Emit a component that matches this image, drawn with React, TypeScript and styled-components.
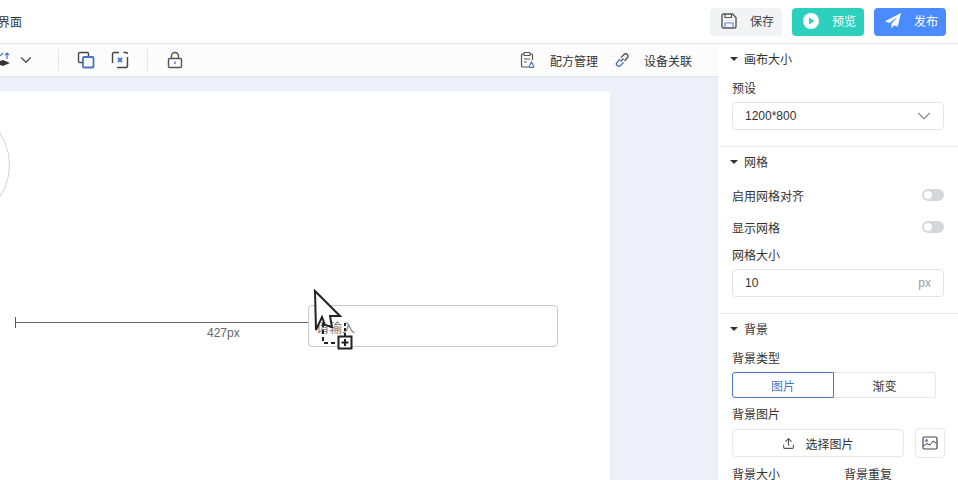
import * as React from 'react';
import styled, { createGlobalStyle } from 'styled-components';
import { ChevronDown, Upload } from 'lucide-react';

const GlobalStyle = createGlobalStyle`
    html, body {
        margin: 0;
        height: 100%;
        overflow: hidden;
        background: #fff;
    }
    body {
        font-family: "Liberation Sans", "Noto Sans CJK SC", sans-serif;
        font-size: 12px;
        color: #333;
    }
    * { box-sizing: border-box; }
`

const Page = styled.div`
    width: 958px;
    height: 480px;
    display: flex;
    flex-direction: column;
    overflow: hidden;
`

const Header = styled.header`
    height: 44px;
    flex: none;
    display: flex;
    align-items: center;
    justify-content: space-between;
    padding: 0 12px 0 0;
    border-bottom: 1px solid #e4e5e8;
`

const Title = styled.div`
    margin-left: -2px;
    font-size: 12px;
    color: #333;
`

const HeaderActions = styled.div`
    display: flex;
    gap: 10px;
`

const ActionButton = styled.button<{$bg: string; $color: string}>`
    width: 72px;
    height: 28px;
    border: none;
    border-radius: 4px;
    padding: 0 0 2px 10px;
    display: flex;
    align-items: center;
    gap: 12px;
    font: inherit;
    background: ${({$bg}) => $bg};
    color: ${({$color}) => $color};
`

const Body = styled.div`
    flex: 1;
    display: flex;
    min-height: 0;
`

const Main = styled.main`
    flex: 1;
    min-width: 0;
    display: flex;
    flex-direction: column;
`

const Toolbar = styled.div`
    height: 33px;
    flex: none;
    display: flex;
    align-items: center;
    justify-content: space-between;
    background: #fcfcfc;
    border-bottom: 1px solid #e6e7ea;
    padding-right: 26px;
`

const ToolGroup = styled.div`
    display: flex;
    align-items: center;
`

const ToolDivider = styled.span<{$left: number; $right: number}>`
    width: 1px;
    height: 22px;
    background: #dfe3ec;
    margin: 0 ${({$right}) => $right}px 0 ${({$left}) => $left}px;
`

const IconSlot = styled.span<{$gap?: number}>`
    display: flex;
    width: 18px;
    height: 18px;
    margin-right: ${({$gap}) => $gap ?? 0}px;
`

const ToolLabel = styled.span<{$gap?: number}>`
    margin-left: 13px;
    margin-right: ${({$gap}) => $gap ?? 0}px;
    color: #333;
`

const CanvasArea = styled.div`
    flex: 1;
    background: #eef0f9;
    padding-top: 14px;
    overflow: hidden;
`

const Sheet = styled.div`
    position: relative;
    width: 610px;
    height: 420px;
    background: #fff;
`

const CircleShape = styled.div`
    position: absolute;
    left: -106px;
    top: 16px;
    width: 116px;
    height: 116px;
    border: 1px solid #d4d4d4;
    border-radius: 50%;
`

const Ruler = styled.div`
    position: absolute;
    left: 15px;
    top: 226px;
    width: 294px;
    height: 11px;
    border-left: 1px solid #5e5258;
    &::after {
        content: "";
        position: absolute;
        left: 0;
        right: 0;
        top: 5px;
        height: 1px;
        background: #6e5f66;
    }
`

const RulerLabel = styled.div`
    position: absolute;
    left: 207px;
    top: 235px;
    color: #666;
    font-size: 12px;
`

const DroppedInput = styled.div`
    position: absolute;
    left: 308px;
    top: 214px;
    width: 250px;
    height: 42px;
    border: 1px solid #c9c9c9;
    border-radius: 4px;
    padding-left: 7px;
    display: flex;
    align-items: center;
    font-size: 13px;
    color: #777;
`

const DragCursor = styled.svg`
    position: absolute;
    left: 312px;
    top: 198px;
`

const Sidebar = styled.aside`
    width: 240px;
    flex: none;
    background: #fff;
    overflow: hidden;
`

const Section = styled.section<{$last?: boolean}>`
    margin-left: 2px;
    padding: 0 14px ${({$last}) => ($last ? 0 : 16)}px 12px;
    border-bottom: ${({$last}) => ($last ? "none" : "1px solid #e8e9ec")};
`

const SectionTitle = styled.div`
    height: 29px;
    display: flex;
    align-items: center;
    gap: 6px;
    color: #333;
    &::before {
        content: "";
        margin-left: -2px;
        border-left: 4px solid transparent;
        border-right: 4px solid transparent;
        border-top: 4px solid #333;
    }
`

const FieldLabel = styled.div<{$top?: number}>`
    height: 14px;
    line-height: 16px;
    margin: ${({$top}) => $top ?? 0}px 0 7px;
    color: #333;
`

const Field = styled.div`
    height: 28px;
    display: flex;
    align-items: center;
    justify-content: space-between;
    padding: 0 12px;
    border: 1px solid #e2e3e6;
    border-radius: 4px;
    color: #333;
`

const SelectChevron = styled(ChevronDown)`
    margin-right: -4px;
`

const Unit = styled.span`
    color: #999;
`

const SwitchList = styled.div`
    margin-top: 3px;
`

const SwitchRow = styled.div`
    height: 32px;
    display: flex;
    align-items: center;
    justify-content: space-between;
`

const SwitchTrack = styled.span`
    width: 22px;
    height: 12px;
    border-radius: 6px;
    background: #d6d7da;
    padding: 2px;
    display: flex;
    &::before {
        content: "";
        width: 8px;
        height: 8px;
        border-radius: 50%;
        background: #fff;
    }
`

const Segmented = styled.div`
    width: 204px;
    height: 26px;
    display: flex;
`

const Segment = styled.div<{$active?: boolean}>`
    width: 102px;
    display: flex;
    align-items: center;
    justify-content: center;
    border: 1px solid ${({$active}) => ($active ? "#4a74c4" : "#e6e7ea")};
    border-left-width: ${({$active}) => ($active ? 1 : 0)}px;
    border-radius: ${({$active}) => ($active ? "3px 0 0 3px" : "0 3px 3px 0")};
    color: ${({$active}) => ($active ? "#4a74c4" : "#333")};
`

const UploadRow = styled.div`
    display: flex;
    align-items: center;
    gap: 11px;
`

const UploadButton = styled.div`
    width: 172px;
    height: 28px;
    flex: none;
    display: flex;
    align-items: center;
    justify-content: center;
    gap: 10px;
    border: 1px solid #e6e7ea;
    border-radius: 4px;
    color: #333;
`

const PictureButton = styled.div`
    width: 30px;
    height: 30px;
    flex: none;
    display: flex;
    align-items: center;
    justify-content: center;
    border: 1px solid #e6e7ea;
    border-radius: 4px;
`

const TwoColumns = styled.div`
    display: grid;
    grid-template-columns: 112px 1fr;
    margin-top: 9px;
`

const SaveIcon = () => (
    <svg width="18" height="18" viewBox="0 0 18 18" fill="none">
        <path d="M2 3.500A1.500 1.500 0 0 1 3.500 2h9L16 5.500v9a1.500 1.500 0 0 1-1.500 1.500h-11A1.500 1.500 0 0 1 2 14.500z" stroke="#555" strokeWidth="1.400" />
        <path d="M5 2v3.500h6.500V2" stroke="#555" strokeWidth="1.200" />
        <path d="M5 16v-5h8v5" stroke="#6c8fd6" strokeWidth="1.200" />
    </svg>
)

const PlayIcon = () => (
    <svg width="18" height="18" viewBox="0 0 18 18">
        <circle cx="9" cy="9" r="8" fill="#fff" />
        <path d="M7 5.500 12.500 9 7 12.500z" fill="#2dd0bd" />
    </svg>
)

const SendIcon = () => (
    <svg width="18" height="18" viewBox="0 0 18 18" fill="#fff">
        <path d="M17 1 1 9.200l4.600 1.900L14 4.500 7.400 12v4.500l2.700-3.300 3.600 1.500z" />
    </svg>
)

const LayerIcon = () => (
    <svg width="18" height="18" viewBox="0 0 18 18" fill="none">
        <path d="M11.500 6V2.800A1.300 1.300 0 0 0 10.200 1.500H2.800A1.300 1.300 0 0 0 1.500 2.800v7.400a1.300 1.300 0 0 0 1.300 1.300H6" stroke="#444" strokeWidth="1.400" />
        <rect x="6" y="6" width="10.500" height="10.500" rx="1" stroke="#4a74c4" strokeWidth="1.800" />
    </svg>
)

const UngroupIcon = () => (
    <svg width="18" height="18" viewBox="0 0 18 18" fill="none">
        <path d="M8 1.500H3A1.500 1.500 0 0 0 1.500 3v9M12.500 1.500H15A1.500 1.500 0 0 1 16.500 3M16.500 6v9a1.500 1.500 0 0 1-1.500 1.500H6" stroke="#444" strokeWidth="1.400" />
        <path d="m7 7 4 4M11 7l-4 4" stroke="#4a74c4" strokeWidth="1.800" />
    </svg>
)

const LockIcon = () => (
    <svg width="18" height="18" viewBox="0 0 18 18" fill="none">
        <rect x="2.500" y="7.500" width="13" height="9" rx="1.200" stroke="#555" strokeWidth="1.400" />
        <path d="M5.500 7.500V5a3.500 3.500 0 0 1 7 0v2.500" stroke="#555" strokeWidth="1.400" />
        <rect x="8.300" y="10.500" width="1.400" height="2.600" fill="#4a74c4" />
    </svg>
)

const AlignIcon = () => (
    <svg width="18" height="18" viewBox="0 0 18 18" fill="none">
        <path d="M-6 12 3 9l7 3-7 3z" fill="#333" />
        <path d="M7 8V2M5 4l2-2 2 2M0 5l3-3" stroke="#4a74c4" strokeWidth="1.200" />
    </svg>
)

const RecipeIcon = () => (
    <svg width="18" height="18" viewBox="0 0 18 18" fill="none">
        <path d="M5 3H3.500A1 1 0 0 0 2.500 4v11a1 1 0 0 0 1 1H10M11 3h1.500a1 1 0 0 1 1 1v5" stroke="#555" strokeWidth="1.200" />
        <rect x="5" y="1.500" width="6" height="3" rx=".6" stroke="#555" strokeWidth="1.200" />
        <path d="M5 8h6M5 11h3" stroke="#555" strokeWidth="1.200" />
        <path d="m12.500 11-2.300 4.500a.6.6 0 0 0 .6.900h3.400a.6.6 0 0 0 .6-.9L12.500 11z" stroke="#4a74c4" strokeWidth="1.100" />
    </svg>
)

const LinkIcon = () => (
    <svg width="18" height="18" viewBox="0 0 18 18" fill="none" stroke="#4a74c4" strokeWidth="1.400">
        <path d="M8 6.500 11 3.500a2.300 2.300 0 0 1 3.300 3.300L11.500 10" stroke="#555" />
        <path d="M10.500 11.500 7.500 14.500a2.300 2.300 0 0 1-3.300-3.300L7 8" />
        <path d="m7.500 10.500 3-3" stroke="#555" />
    </svg>
)

const PictureIcon = () => (
    <svg width="16" height="14" viewBox="0 0 16 14" fill="none">
        <rect x="1" y="1" width="14" height="12" rx="1.500" stroke="#444" strokeWidth="1.200" />
        <circle cx="4.500" cy="4.500" r="1.500" fill="#5f86d2" />
        <path d="M1.500 10 5 7.500l3 1.500 3-4 3.500 2.500" stroke="#444" />
    </svg>
)

export default function App() {
    return (
        <Page>
            <GlobalStyle />
            <Header>
                <Title>界面</Title>
                <HeaderActions>
                    <ActionButton $bg="#f2f3f5" $color="#444"><SaveIcon />保存</ActionButton>
                    <ActionButton $bg="#2dd0bd" $color="#fff"><PlayIcon />预览</ActionButton>
                    <ActionButton $bg="#4a8cff" $color="#fff"><SendIcon />发布</ActionButton>
                </HeaderActions>
            </Header>
            <Body>
                <Main>
                    <Toolbar>
                        <ToolGroup>
                            <IconSlot $gap={-1}><AlignIcon /></IconSlot>
                            <ChevronDown size={18} color="#444" strokeWidth={1.500} />
                            <ToolDivider $left={23} $right={18} />
                            <IconSlot $gap={16}><LayerIcon /></IconSlot>
                            <IconSlot><UngroupIcon /></IconSlot>
                            <ToolDivider $left={18} $right={18} />
                            <IconSlot><LockIcon /></IconSlot>
                        </ToolGroup>
                        <ToolGroup>
                            <IconSlot><RecipeIcon /></IconSlot>
                            <ToolLabel $gap={15}>配方管理</ToolLabel>
                            <IconSlot><LinkIcon /></IconSlot>
                            <ToolLabel>设备关联</ToolLabel>
                        </ToolGroup>
                    </Toolbar>
                    <CanvasArea>
                        <Sheet>
                            <CircleShape />
                            <Ruler />
                            <RulerLabel>427px</RulerLabel>
                            <DroppedInput>请输入</DroppedInput>
                            <DragCursor width="44" height="62" viewBox="0 0 44 62" fill="none">
                                <path d="M3 2 28 27H18l2 11-7-2-3-8-6 13z" fill="#fff" stroke="#222" strokeWidth="2" />
                                <path d="M11 34v20h15" stroke="#222" strokeWidth="2" strokeDasharray="4 3" />
                                <path d="M33 34v13" stroke="#222" strokeWidth="2" strokeDasharray="3 2" />
                                <rect x="26.500" y="47.500" width="13" height="12" fill="#fff" stroke="#222" strokeWidth="2" />
                                <path d="M33 50v7M29.500 53.500h7" stroke="#222" strokeWidth="2" />
                            </DragCursor>
                        </Sheet>
                    </CanvasArea>
                </Main>
                <Sidebar>
                    <Section>
                        <SectionTitle>画布大小</SectionTitle>
                        <FieldLabel $top={8}>预设</FieldLabel>
                        <Field>1200*800<SelectChevron size={22} color="#888" strokeWidth={1.200} /></Field>
                    </Section>
                    <Section>
                        <SectionTitle>网格</SectionTitle>
                        <SwitchList>
                            <SwitchRow>启用网格对齐<SwitchTrack /></SwitchRow>
                            <SwitchRow>显示网格<SwitchTrack /></SwitchRow>
                        </SwitchList>
                        <FieldLabel $top={5}>网格大小</FieldLabel>
                        <Field>10<Unit>px</Unit></Field>
                    </Section>
                    <Section $last>
                        <SectionTitle>背景</SectionTitle>
                        <FieldLabel $top={8}>背景类型</FieldLabel>
                        <Segmented>
                            <Segment $active>图片</Segment>
                            <Segment>渐变</Segment>
                        </Segmented>
                        <FieldLabel $top={9}>背景图片</FieldLabel>
                        <UploadRow>
                            <UploadButton><Upload size={13} color="#555" />选择图片</UploadButton>
                            <PictureButton><PictureIcon /></PictureButton>
                        </UploadRow>
                        <TwoColumns>
                            <FieldLabel>背景大小</FieldLabel>
                            <FieldLabel>背景重复</FieldLabel>
                        </TwoColumns>
                    </Section>
                </Sidebar>
            </Body>
        </Page>
    )
}
